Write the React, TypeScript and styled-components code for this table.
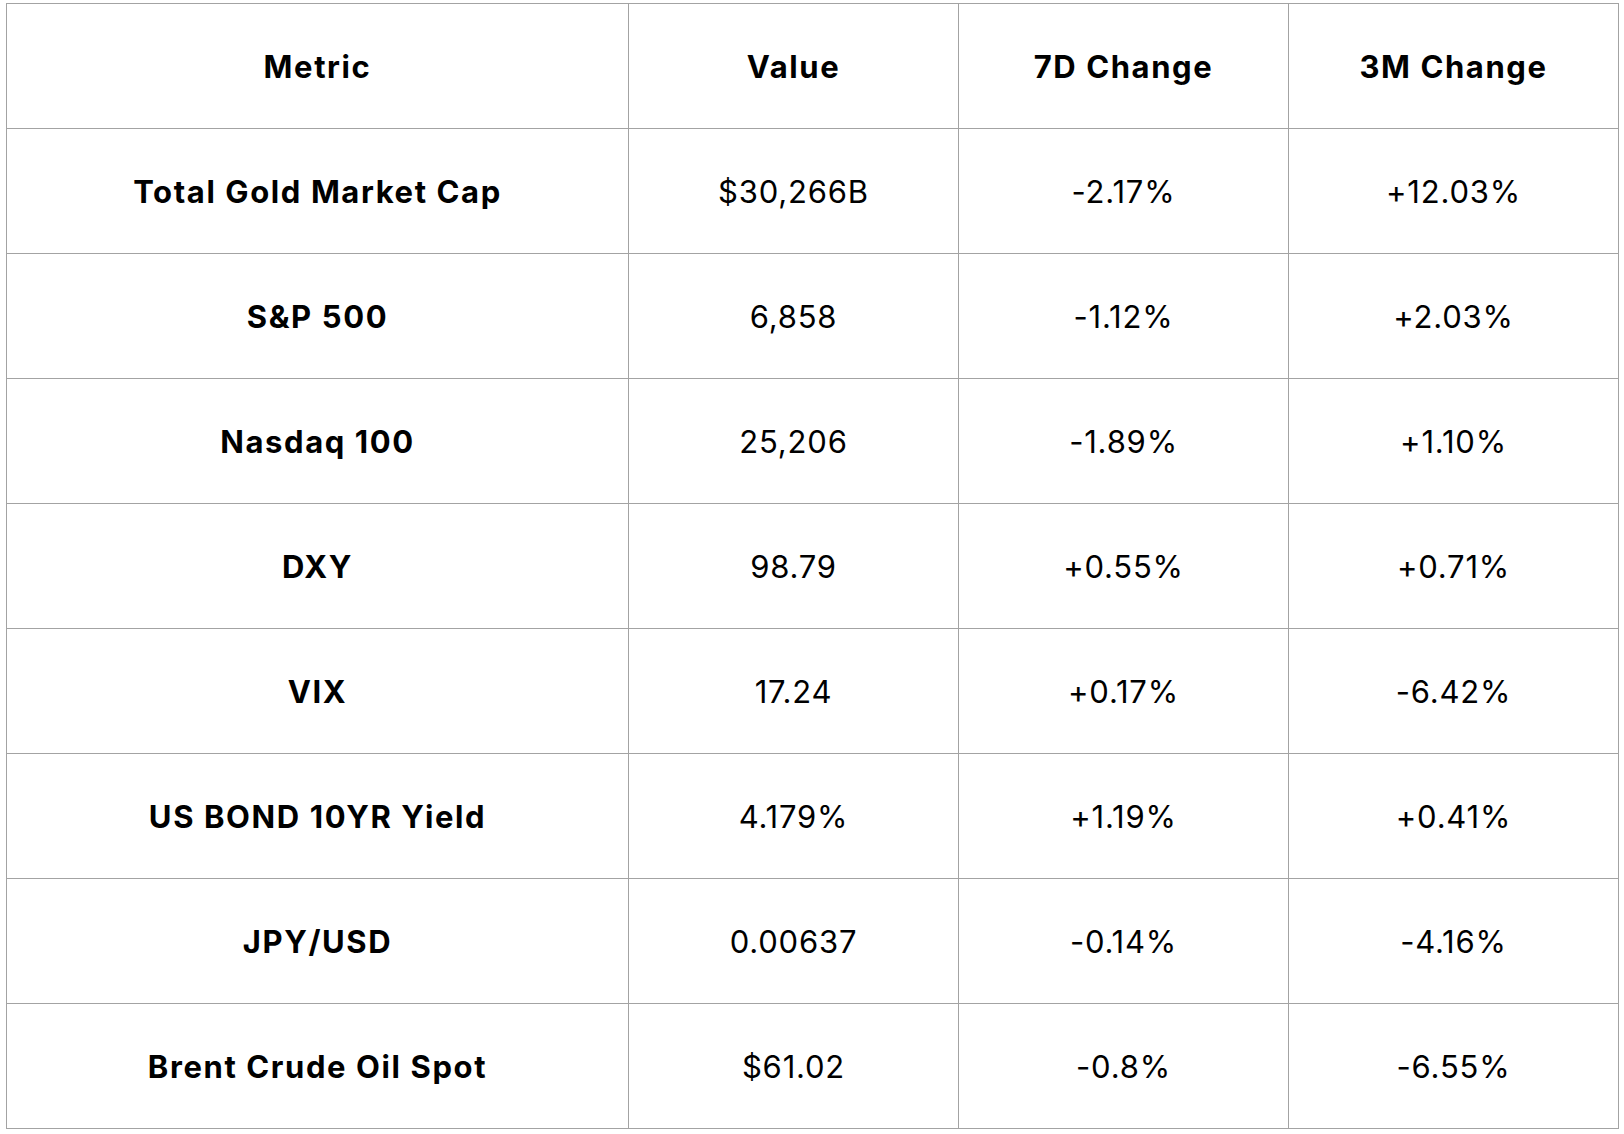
import React from "react"
import styled, { createGlobalStyle } from "styled-components"

const GlobalStyle = createGlobalStyle`
  html, body {
    margin: 0;
    padding: 0;
    background: #fff;
  }
  body {
    font-family: Inter, "Liberation Sans", sans-serif;
    color: #000;
  }
`

const headers = ["Metric", "Value", "7D Change", "3M Change"]
const colWidths = [622, 330, 330, 330]

const rows = [
  ["Total Gold Market Cap", "$30,266B", "-2.17%", "+12.03%"],
  ["S&P 500", "6,858", "-1.12%", "+2.03%"],
  ["Nasdaq 100", "25,206", "-1.89%", "+1.10%"],
  ["DXY", "98.79", "+0.55%", "+0.71%"],
  ["VIX", "17.24", "+0.17%", "-6.42%"],
  ["US BOND 10YR Yield", "4.179%", "+1.19%", "+0.41%"],
  ["JPY/USD", "0.00637", "-0.14%", "-4.16%"],
  ["Brent Crude Oil Spot", "$61.02", "-0.8%", "-6.55%"],
]

export default function App() {
  return (
    <>
      <GlobalStyle />
      <Page>
        <StyledTable>
          <colgroup>
            {colWidths.map((w, i) => (
              <Col key={i} $width={w} />
            ))}
          </colgroup>
          <thead>
            <tr>
              {headers.map(h => (
                <Cell as="th" key={h} $bold>
                  {h}
                </Cell>
              ))}
            </tr>
          </thead>
          <tbody>
            {rows.map(r => (
              <tr key={r[0]}>
                <Cell $bold>{r[0]}</Cell>
                <Cell>{r[1]}</Cell>
                <Cell>{r[2]}</Cell>
                <Cell>{r[3]}</Cell>
              </tr>
            ))}
          </tbody>
        </StyledTable>
      </Page>
    </>
  )
}

const Page = styled.div`
  padding: 3px 0 0 6px;
`

const StyledTable = styled.table`
  border-collapse: collapse;
  table-layout: fixed;
  width: 1612px;
`

const Col = styled.col<{ $width: number }>`
  width: ${p => p.$width}px;
`

const Cell = styled.td<{ $bold?: boolean }>`
  height: 124px;
  padding: 0;
  border: 1px solid #a3a3a3;
  font-size: 31px;
  font-weight: ${p => (p.$bold ? 700 : 400)};
  letter-spacing: ${p => (p.$bold ? "1.6px" : "0.8px")};
  text-align: center;
  vertical-align: middle;
`
